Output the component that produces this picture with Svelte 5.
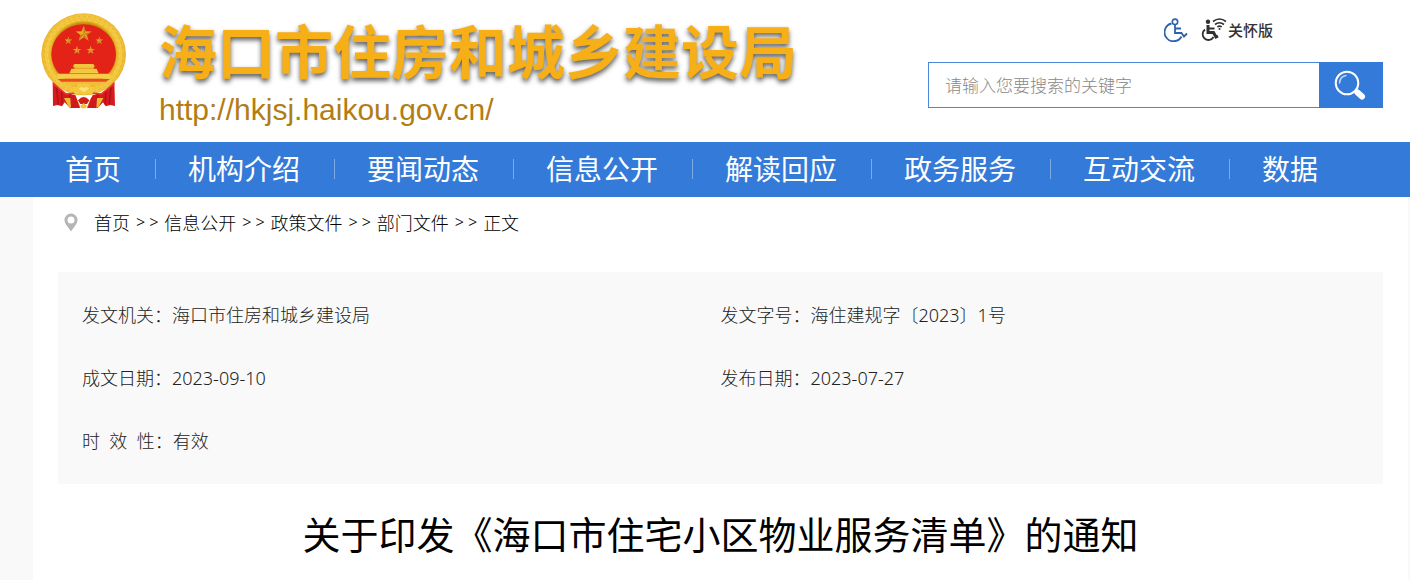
<script lang="ts">
  const nav = ['首页', '机构介绍', '要闻动态', '信息公开', '解读回应', '政务服务', '互动交流', '数据'];
  const crumbs = ['首页', '信息公开', '政策文件', '部门文件', '正文'];
  const info = [
    { label: '发文机关：', value: '海口市住房和城乡建设局' },
    { label: '发文字号：', value: '海住建规字〔2023〕1号' },
    { label: '成文日期：', value: '2023-09-10' },
    { label: '发布日期：', value: '2023-07-27' },
    { label: '时  效  性：', value: '有效' }
  ];
  const star = 'M0-10 2.4-3.2 9.5-3.1 3.8 1.2 5.9 8.1 0 4-5.9 8.1-3.8 1.2-9.5-3.1-2.4-3.2Z';
  const stars = [
    { x: 160, y: 87, s: 2.5 },
    { x: 114, y: 107, s: 1.2 },
    { x: 207, y: 107, s: 1.2 },
    { x: 140, y: 136, s: 1.3 },
    { x: 181, y: 136, s: 1.3 }
  ];
  let keyword = $state('');
</script>

<header>
  <svg class="emblem" viewBox="32 24 258 291" aria-hidden="true">
    <defs>
      <radialGradient id="gold" gradientUnits="userSpaceOnUse" cx="160" cy="148" r="127">
        <stop offset="0.74" stop-color="#c98f13" />
        <stop offset="0.79" stop-color="#ecb92c" />
        <stop offset="0.9" stop-color="#f4cc45" />
        <stop offset="1" stop-color="#e8b02a" />
      </radialGradient>
    </defs>
    <ellipse cx="160" cy="148" rx="127" ry="123" fill="url(#gold)" />
    <ellipse cx="160" cy="148" rx="118" ry="114" fill="none" stroke="#e0a82a" stroke-width="2" stroke-dasharray="9 7" />
    <ellipse cx="160" cy="148" rx="108" ry="103" fill="none" stroke="#f9dc68" stroke-width="2" stroke-dasharray="11 6" />
    <ellipse cx="160" cy="148" rx="97" ry="90" fill="#e42318" />
    {#each stars as p}
      <path d={star} transform={`translate(${p.x} ${p.y}) scale(${p.s})`} fill="#e9aa25" />
      <path d="M0-10 2.4-3.2 0 0ZM9.5-3.1 3.8 1.2 0 0ZM5.9 8.1 0 4 0 0ZM-5.9 8.1-3.8 1.2 0 0Z" transform={`translate(${p.x} ${p.y}) scale(${p.s})`} fill="#c9791c" />
    {/each}
    <path d="M132 177h57l5 8h-4v6h9l4 10h-84l4-10h9v-6h-5Z" fill="#f4c63e" />
    <path d="M129 190h63" stroke="#d78d20" stroke-width="2" />
    <path d="M118 201h86v4H118ZM81 206h159v15H81Z" fill="#f6cc48" />
    <path d="M82 222h157l-14 10H95Z" fill="#e94e20" />
    <path d="M92 230h137l-24 12h-89Z" fill="#f3bd38" />
    <path d="M67 230 103 263 135 270 150 308 132 305 119 309 103 292 95 304 81 300 68 303Z" fill="#d71a1e" />
    <path d="M252 230 219 263 187 270 170 308 189 305 202 309 218 292 226 304 240 300 254 303Z" fill="#d71a1e" />
    <path d="M78 246 84 298M94 258 95 299M119 267 121 305M242 246 237 298M226 258 225 299M202 267 200 305" stroke="#a81318" stroke-width="4" fill="none" />
    <path d="M68 236 107 267 137 264M252 236 213 267 183 264" stroke="#f03528" stroke-width="5" fill="none" />
    <path d="M101 279 138 279 151 307H116ZM219 279 182 279 169 307H204Z" fill="#edbc34" />
    <path d="M119 266 138 279 149 309 122 309ZM201 266 182 279 171 309 198 309Z" fill="#cf191d" />
    <path d="M136 249q9-17 19-12 6-5 12 0 11-4 17 12l11 3-11 17-15-7-9 9-10-9-15 7-11-17Z" fill="#f4c83f" />
    <path d="M145 251q7-9 15-1 8-8 16 1l-16 11Z" fill="#ffe17a" />
    <path d="M143 286q17-20 34 0l-7 11H150Z" fill="#cd201b" />
    <path d="M150 302l10-8 10 8-4 8h-12Z" fill="#f1c13b" />
  </svg>

  <div class="brand">
    <h1>海口市住房和城乡建设局</h1>
    <a class="site" href="http://hkjsj.haikou.gov.cn/">http://hkjsj.haikou.gov.cn/</a>
  </div>

  <div class="tools">
    <div class="access">
      <a href="#accessible" aria-label="无障碍">
        <svg width="24" height="24" viewBox="0 0 24 24" fill="none" stroke="#2d62ad" stroke-width="1.8">
          <circle cx="11" cy="3.800" r="2.700" stroke-width="1.600" />
          <path d="M7.500 5.500A9 9 0 1 0 17.500 18.500" />
          <path d="M11 7v8h6.500l2.500 3.500 3-3M11 10.500h6" />
        </svg>
      </a>
      <a class="care" href="#care">
        <svg width="28" height="24" viewBox="0 0 28 24" fill="none" stroke="#303030" stroke-width="1.800">
          <circle cx="8" cy="3.800" r="2.200" fill="#303030" stroke="none" />
          <path d="M8 7v7.500h5.500l2.500 4.500 2-1" stroke-width="3" />
          <path d="M9 10.500h5.500M5 11.500a5.800 5.800 0 1 0 8.500 7.500" />
          <path d="M13 3.500q6.500-5 13 0M15 6.500q4.500-3.500 9 0M17.300 9q2.200-1.800 4.400 0" stroke-width="1.600" />
          <circle cx="19.500" cy="11" r="1" fill="#303030" stroke="none" />
        </svg>
        <span>关怀版</span>
      </a>
    </div>
    <form class="search" onsubmit={(e) => e.preventDefault()}>
      <input type="text" bind:value={keyword} placeholder="请输入您要搜索的关键字" aria-label="请输入您要搜索的关键字" />
      <button type="submit" aria-label="搜索">
        <svg width="32" height="32" viewBox="0 0 32 32" fill="none" stroke="#fff">
          <circle cx="13" cy="14" r="11.300" stroke-width="2" />
          <path d="M5.500 14Q6 7.500 12 6.500" stroke-width="1.500" stroke-linecap="round" opacity="0.7" />
          <path d="M20.500 21.500 23 24" stroke-width="3" />
          <path d="M23.500 23.500 28 27.500" stroke-width="6" stroke-linecap="round" />
        </svg>
      </button>
    </form>
  </div>
</header>

<nav>
  {#each nav as item}
    <a href="#nav">{item}</a>
  {/each}
</nav>

<div class="page">
  <main>
    <div class="crumbs">
      <svg width="14" height="19" viewBox="0 0 14 19" aria-hidden="true">
        <path fill="#b5b5b5" fill-rule="evenodd" d="M7 .5a6.500 6.500 0 0 1 6.500 6.500c0 3.500-3.500 7-6.500 11.500C4 14 .5 10.500.5 7A6.500 6.500 0 0 1 7 .5Zm0 3a3.500 3.500 0 1 0 0 7 3.500 3.500 0 0 0 0-7Z" />
      </svg>
      {#each crumbs as crumb, i}
        {#if i > 0}<span class="sep"><span>&gt;</span><span>&gt;</span></span>{/if}
        <a href="#crumb">{crumb}</a>
      {/each}
    </div>

    <dl>
      {#each info as row}
        <div>
          <dt>{row.label}</dt>
          <dd>{row.value}</dd>
        </div>
      {/each}
    </dl>

    <h2>关于印发《海口市住宅小区物业服务清单》的通知</h2>
  </main>
</div>

<style>
  :global(body) {
    margin: 0;
    background: #fff;
    font-family: "Noto Sans", "Noto Sans CJK SC", sans-serif;
    color: #222;
  }
  a {
    color: inherit;
    text-decoration: none;
  }
  header {
    display: flex;
    height: 142px;
    padding: 0 27px 0 41px;
    box-sizing: border-box;
  }
  .emblem {
    flex: none;
    width: 86px;
    height: 97px;
    margin-top: 13px;
  }
  .brand {
    flex: none;
    margin-left: 32px;
    padding-top: 12px;
  }
  h1 {
    margin: 0;
    font-size: 58px;
    line-height: 74px;
    font-weight: 700;
    font-family: "Noto Sans CJK SC", sans-serif;
    color: #f7af18;
    text-shadow: 0 3px 5px rgba(0, 0, 0, 0.65);
  }
  .site {
    display: block;
    margin-top: 4px;
    font: 30px/40px "Liberation Sans", sans-serif;
    color: #b27d13;
  }
  .tools {
    flex: 1;
    min-width: 0;
    max-width: 455px;
    margin-left: auto;
  }
  .access {
    display: flex;
    align-items: center;
    gap: 12px;
    height: 24px;
    padding: 18px 110px 20px 0;
    justify-content: flex-end;
  }
  .access a {
    display: flex;
    align-items: center;
  }
  .care span {
    font-size: 15px;
    line-height: 24px;
    font-weight: 500;
    color: #333;
  }
  .search {
    display: flex;
    height: 46px;
  }
  .search input {
    flex: 1;
    min-width: 0;
    box-sizing: border-box;
    border: 1px solid #4a86da;
    border-right: 0;
    border-radius: 0;
    padding: 0 16px;
    background: #fff;
    font: 300 17px "Noto Sans", "Noto Sans CJK SC", sans-serif;
    color: #333;
    outline: 0;
  }
  .search input::placeholder {
    color: #888;
  }
  .search button {
    width: 64px;
    border: 0;
    padding: 0 2px 0 0;
    display: grid;
    place-items: center;
    background: #347ad8;
  }
  nav {
    display: flex;
    align-items: center;
    height: 55px;
    padding-left: 32px;
    background: #347ad8;
    color: #fff;
    overflow: hidden;
  }
  nav a {
    position: relative;
    flex: none;
    padding: 0 33px;
    font-size: 28px;
    line-height: 57px;
    white-space: nowrap;
  }
  nav a + a {
    margin-left: 1px;
  }
  nav a + a::before {
    content: "";
    position: absolute;
    left: 0;
    top: 18px;
    width: 1px;
    height: 20px;
    background: #7faae6;
  }
  .page {
    padding: 0 2px 0 33px;
    background: #f9f9f9;
  }
  main {
    padding: 0 25px 18px;
    background: #fff;
  }
  .crumbs {
    display: flex;
    align-items: center;
    gap: 6px;
    height: 50px;
    padding: 0 0 25px 6px;
    font-size: 18px;
    font-weight: 300;
    color: #000;
  }
  .crumbs svg {
    margin-right: 10px;
  }
  .sep {
    display: flex;
    gap: 4px;
    font-size: 16px;
  }
  dl {
    display: grid;
    grid-template-columns: 1fr 1fr;
    margin: 0;
    padding: 12px 24px 11px;
    background: #f9f9f9;
    font-size: 18px;
    line-height: 63px;
    font-weight: 300;
    color: #222;
  }
  dl div {
    display: flex;
  }
  dt {
    white-space: pre;
  }
  dd {
    margin: 0;
  }
  h2 {
    margin: 0;
    padding-top: 21px;
    text-align: center;
    font-size: 38px;
    line-height: 58px;
    font-weight: 400;
    color: #000;
  }
</style>
